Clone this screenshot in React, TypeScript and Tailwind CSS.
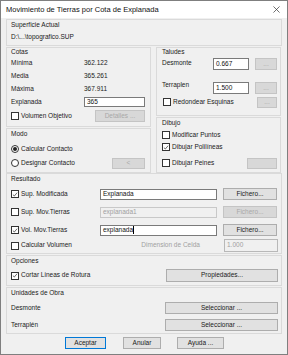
import React from "react";

const Check = ({ checked, label, disabled }: { checked?: boolean; label: string; disabled?: boolean }) => (
  <div className="flex items-center gap-[2px] h-full">
    <span className="w-[8px] h-[8px] border border-[#333333] bg-white flex items-center justify-center shrink-0">
      {checked && (
        <svg viewBox="0 0 8 8" className="w-[7px] h-[7px]">
          <path d="M1.2 4.2 L3.1 6 L6.8 1.6" stroke="#222" fill="none" strokeWidth="0.9" />
        </svg>
      )}
    </span>
    <span className={disabled ? "text-[#a0a0a0]" : ""}>{label}</span>
  </div>
);

const Radio = ({ checked, label }: { checked?: boolean; label: string }) => (
  <div className="flex items-center gap-[2px] h-full">
    <span className="w-[8px] h-[8px] rounded-full border border-[#333333] bg-white flex items-center justify-center shrink-0">
      {checked && <span className="w-[4px] h-[4px] rounded-full bg-[#222]" />}
    </span>
    <span>{label}</span>
  </div>
);

const Btn = ({ children, className = "", disabled }: { children?: React.ReactNode; className?: string; disabled?: boolean }) => (
  <div
    className={
      "border flex items-center justify-center shrink-0 " +
      (disabled ? "border-[#c4c4c4] bg-[#d8d8d8] text-[#a8a8a8] " : "border-[#adadad] bg-[#e1e1e1] text-[#1a1a1a] ") +
      className
    }
  >
    {children}
  </div>
);

const Input = ({ value, className = "", disabled, cursor }: { value: string; className?: string; disabled?: boolean; cursor?: boolean }) => (
  <div
    className={
      "border flex items-center pl-[2px] shrink-0 " +
      (disabled ? "border-[#c8c8c8] bg-[#f0f0f0] text-[#a0a0a0] " : "border-[#7a7a7a] bg-white text-[#111] ") +
      className
    }
  >
    <span>{value}</span>
    {cursor && <span className="w-[1px] h-[8px] bg-black" />}
  </div>
);

const Group = ({ children, className = "" }: { children?: React.ReactNode; className?: string }) => (
  <div className={"border border-[#dadada] flex flex-col " + className}>{children}</div>
);

export default function App() {
  return (
    <div className="w-[288px] h-[355px] bg-[#f0f0f0] border border-[#7f7f7f] flex flex-col font-['Liberation_Sans',Arial,sans-serif] text-[6.5px] text-[#1a1a1a] leading-none overflow-hidden">
      {/* title bar */}
      <div className="h-[17px] bg-white flex items-center justify-between pl-[5px] pr-[7px] shrink-0">
        <span className="text-[7.5px] text-[#111]">Movimiento de Tierras por Cota de Explanada</span>
        <svg viewBox="0 0 8 8" className="w-[7px] h-[7px]">
          <path d="M0.5 0.5 L7.5 7.5 M7.5 0.5 L0.5 7.5" stroke="#333" strokeWidth="0.8" />
        </svg>
      </div>
      <div className="flex flex-col px-[5px] pt-[1px]">
        {/* Superficie Actual */}
        <Group className="h-[27px] pl-[4px]">
          <div className="h-[10px] flex items-center pt-[1px]">Superficie Actual</div>
          <div className="h-[12px] mt-[1px] flex items-center">D:\...\topografico.SUP</div>
        </Group>

        <div className="flex gap-[5px] mt-[1px]">
          {/* left column */}
          <div className="w-[145px] flex flex-col gap-[1px]">
            <Group className="h-[80px] pl-[4px] pr-[5px]">
              <div className="h-[8px] flex items-center">Cotas</div>
              <div className="h-[13px] flex items-center mt-[1px]">
                <span className="w-[73px]">Mínima</span>
                <span>362.122</span>
              </div>
              <div className="h-[13px] flex items-center">
                <span className="w-[73px]">Media</span>
                <span>365.261</span>
              </div>
              <div className="h-[13px] flex items-center">
                <span className="w-[73px]">Máxima</span>
                <span>367.911</span>
              </div>
              <div className="h-[12px] flex items-center">
                <span className="w-[73px]">Explanada</span>
                <Input value="365" className="w-[61px] h-[10px]" />
              </div>
              <div className="h-[12px] flex items-center justify-between mt-[2px]">
                <Check label="Volumen Objetivo" />
                <Btn disabled className="w-[50px] h-[12px]">Detalles ...</Btn>
              </div>
            </Group>
            <Group className="h-[45px] pl-[4px] pr-[5px]">
              <div className="h-[8px] flex items-center mt-[1px]">Modo</div>
              <div className="h-[12px] flex items-center mt-[5px]">
                <Radio checked label="Calcular Contacto" />
              </div>
              <div className="h-[12px] flex items-center justify-between mt-[2px]">
                <Radio label="Designar Contacto" />
                <Btn disabled className="w-[33px] h-[11px]">&lt;</Btn>
              </div>
            </Group>
          </div>
          {/* right column */}
          <div className="w-[125px] flex flex-col gap-[1px]">
            <Group className="h-[69px] pl-[5px] pr-[3px]">
              <div className="h-[8px] flex items-center">Taludes</div>
              <div className="h-[12px] flex items-center mt-[2px]">
                <span className="w-[51px] self-start pt-[2px]">Desmonte</span>
                <Input value="0.667" className="w-[36px] h-[12px]" />
                <Btn disabled className="w-[22px] h-[12px] ml-[6px]">...</Btn>
              </div>
              <div className="h-[12px] flex items-center mt-[12px]">
                <span className="w-[51px] self-start">Terraplen</span>
                <Input value="1.500" className="w-[36px] h-[12px]" />
                <Btn disabled className="w-[22px] h-[12px] ml-[6px]">...</Btn>
              </div>
              <div className="h-[12px] flex items-center justify-between mt-[2px]">
                <div className="pl-[1px] h-full"><Check label="Redondear Esquinas" /></div>
                <Btn disabled className="w-[20px] h-[11px]">...</Btn>
              </div>
            </Group>
            <Group className="h-[56px] pl-[5px] pr-[3px]">
              <div className="h-[8px] flex items-center mt-[1px]">Dibujo</div>
              <div className="h-[12px] flex items-center mt-[2px]">
                <Check label="Modificar Puntos" />
              </div>
              <div className="h-[12px] flex items-center">
                <Check checked label="Dibujar Polilíneas" />
              </div>
              <div className="h-[12px] flex items-center justify-between mt-[4px]">
                <Check label="Dibujar Peines" />
                <Btn disabled className="w-[30px] h-[11px]" />
              </div>
            </Group>
          </div>
        </div>

        {/* Resultado */}
        <Group className="h-[81px] pl-[4px] pr-[3px]">
          <div className="h-[8px] flex items-center mt-[1px]">Resultado</div>
          <div className="h-[12px] flex items-center mt-[5px]">
            <div className="w-[89px] h-full"><Check checked label="Sup. Modificada" /></div>
            <Input value="Explanada" className="w-[117px] h-[11px]" />
            <Btn className="w-[54px] h-[12px] ml-[6px]">Fichero...</Btn>
          </div>
          <div className="h-[12px] flex items-center mt-[6px]">
            <div className="w-[89px] h-full"><Check label="Sup. Mov.Tierras" /></div>
            <Input disabled value="explanada1" className="w-[117px] h-[11px]" />
            <Btn disabled className="w-[54px] h-[12px] ml-[6px]">Fichero...</Btn>
          </div>
          <div className="h-[12px] flex items-center mt-[6px]">
            <div className="w-[89px] h-full"><Check checked label="Vol. Mov.Tierras" /></div>
            <Input value="explanada" cursor className="w-[117px] h-[11px]" />
            <Btn className="w-[54px] h-[12px] ml-[6px]">Fichero...</Btn>
          </div>
          <div className="h-[13px] flex items-center mt-[3px]">
            <div className="w-[131px] h-full"><Check label="Calcular Volumen" /></div>
            <span className="w-[75px] text-[#a0a0a0]">Dimension de Celda</span>
            <Input disabled value="1.000" className="w-[54px] h-[13px] ml-[8px] !border-[#b8b8b8]" />
          </div>
        </Group>

        {/* Opciones */}
        <Group className="h-[31px] mt-[1px] pl-[4px] pr-[3px]">
          <div className="h-[8px] flex items-center mt-[1px]">Opciones</div>
          <div className="h-[13px] flex items-center justify-between mt-[4px]">
            <Check checked label="Cortar Lineas de Rotura" />
            <Btn className="w-[112px] h-[13px]">Propiedades...</Btn>
          </div>
        </Group>

        {/* Unidades de Obra */}
        <Group className="h-[47px] mt-[1px] pl-[4px] pr-[3px]">
          <div className="h-[8px] flex items-center mt-[1px]">Unidades de Obra</div>
          <div className="h-[12px] flex items-center justify-between mt-[5px]">
            <span>Desmonte</span>
            <Btn className="w-[113px] h-[12px]">Seleccionar ...</Btn>
          </div>
          <div className="h-[12px] flex items-center justify-between mt-[5px]">
            <span>Terraplén</span>
            <Btn className="w-[113px] h-[12px]">Seleccionar ...</Btn>
          </div>
        </Group>

        {/* bottom buttons */}
        <div className="flex items-center mt-[3px] pl-[59px] h-[12px]">
          <div className="w-[41px] h-[12px] border border-[#0078d7] bg-[#e1e1e1] flex items-center justify-center">
            Aceptar
          </div>
          <Btn className="w-[38px] h-[12px] ml-[17px]">Anular</Btn>
          <Btn className="w-[47px] h-[12px] ml-[16px]">Ayuda ...</Btn>
        </div>
      </div>
    </div>
  );
}
